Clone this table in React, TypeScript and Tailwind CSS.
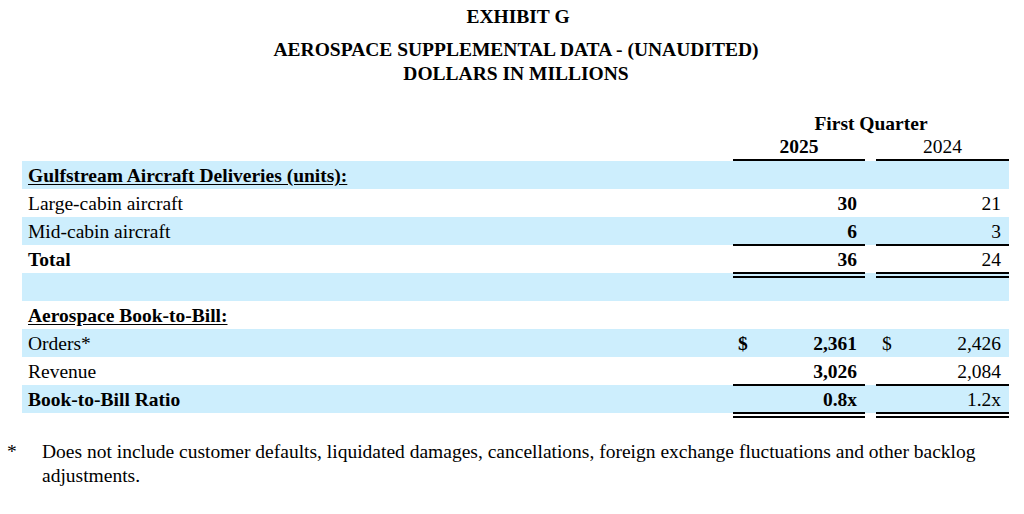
const rowBase = 'grid grid-cols-[711px_132px_11px_133px] h-[28px] items-stretch text-[19.5px] leading-[24px]'

function Row({
  label,
  a,
  b,
  blue,
  bold,
  underline,
  dollar,
  lineA,
}: {
  label: string
  a?: string
  b?: string
  blue?: boolean
  bold?: boolean
  underline?: boolean
  dollar?: boolean
  lineA?: 'single' | 'double'
}) {
  const line =
    lineA === 'single'
      ? 'border-b-2 border-black'
      : lineA === 'double'
        ? 'border-b-[6px] border-double border-black'
        : ''
  return (
    <div className={`${rowBase} ${blue ? 'bg-[#cdeefd]' : ''}`}>
      <div className={`pl-[6px] pt-[3px] ${bold ? 'font-bold' : ''} ${underline ? 'underline underline-offset-2' : ''}`}>
        {label}
      </div>
      <div className={`flex justify-between pl-[5px] pr-[8px] pt-[3px] font-bold ${line}`}>
        <span>{dollar ? '$' : ''}</span>
        <span>{a}</span>
      </div>
      <div />
      <div className={`flex justify-between pl-[6px] pr-[8px] pt-[3px] ${line}`}>
        <span>{dollar ? '$' : ''}</span>
        <span>{b}</span>
      </div>
    </div>
  )
}

export default function App() {
  return (
    <div className="w-[1024px] h-[514px] bg-white text-black font-['Liberation_Serif',serif] overflow-hidden">
      <div className="flex flex-col items-center pt-[5px] font-bold">
        <div className="text-[19.5px] leading-[24px] pl-[12px]">EXHIBIT G</div>
        <div className="text-[19.5px] leading-[24px] mt-[9px] pl-[8px]">AEROSPACE SUPPLEMENTAL DATA - (UNAUDITED)</div>
        <div className="text-[19.5px] leading-[24px] pl-[8px]">DOLLARS IN MILLIONS</div>
      </div>

      <div className="ml-[22px] mt-[26px] w-[987px]">
        <div className="grid grid-cols-[711px_132px_11px_133px] text-[19.5px] leading-[23px]">
          <div />
          <div className="col-span-3 text-center font-bold">First Quarter</div>
          <div />
          <div className="text-center font-bold border-b-2 border-black pb-[1px]">2025</div>
          <div />
          <div className="text-center border-b-2 border-black pb-[1px]">2024</div>
        </div>

        <Row label="Gulfstream Aircraft Deliveries (units):" blue bold underline />
        <Row label="Large-cabin aircraft" a="30" b="21" />
        <Row label="Mid-cabin aircraft" a="6" b="3" blue lineA="single" />
        <Row label="Total" a="36" b="24" bold lineA="double" />
        <Row label="" blue />
        <Row label="Aerospace Book-to-Bill:" bold underline />
        <Row label="Orders*" a="2,361" b="2,426" blue dollar />
        <Row label="Revenue" a="3,026" b="2,084" lineA="single" />
        <Row label="Book-to-Bill Ratio" a="0.8x" b="1.2x" blue bold lineA="double" />
      </div>

      <div className="flex mt-[27px] text-[19.5px] leading-[24px]">
        <div className="w-[42px] pl-[7px]">*</div>
        <div className="w-[960px]">
          Does not include customer defaults, liquidated damages, cancellations, foreign exchange fluctuations and other backlog adjustments.
        </div>
      </div>
    </div>
  )
}
